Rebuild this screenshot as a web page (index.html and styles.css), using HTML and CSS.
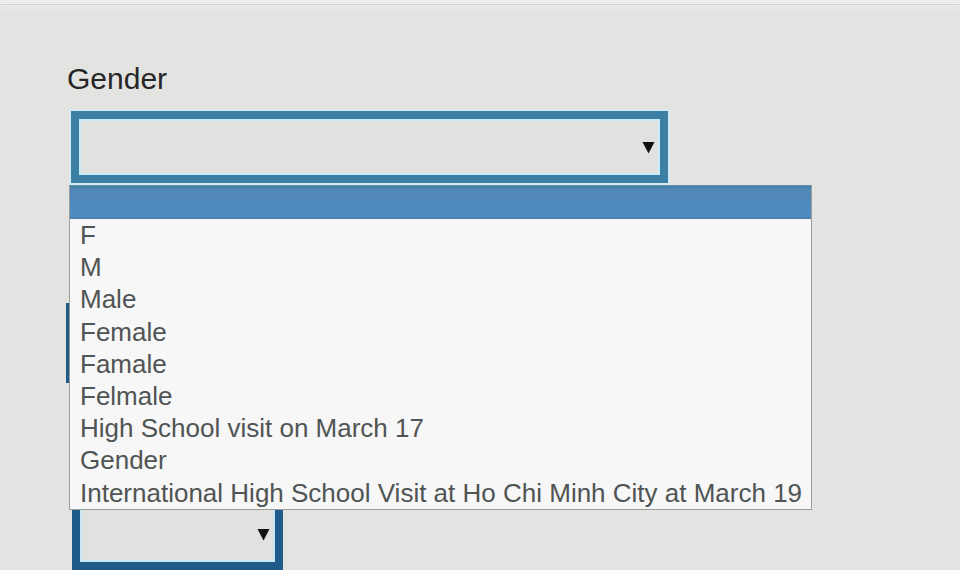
FILE: index.html
```html
<!DOCTYPE html>
<html>
<head>
<meta charset="utf-8">
<link rel="stylesheet" href="styles.css">
</head>
<body>
<div class="topbar"></div>
<div class="form">
  <div class="field">
    <div class="label">Gender</div>
    <div class="select-wrap">
      <div class="select focused">
        <svg class="arrow" width="13" height="14" viewBox="0 0 13 14"><path d="M0.5 2 L12.5 2 L6.5 13.5 Z" fill="#111"/></svg>
      </div>
      <ul class="dropdown">
        <li class="selected">&nbsp;</li>
        <li>F</li>
        <li>M</li>
        <li>Male</li>
        <li>Female</li>
        <li>Famale</li>
        <li>Felmale</li>
        <li>High School visit on March 17</li>
        <li>Gender</li>
        <li>International High School Visit at Ho Chi Minh City at March 19</li>
      </ul>
    </div>
  </div>
  <div class="field2">
    <div class="select dark tall"></div>
  </div>
  <div class="field3">
    <div class="select dark short">
      <svg class="arrow" width="13" height="14" viewBox="0 0 13 14"><path d="M0.5 2 L12.5 2 L6.5 13.5 Z" fill="#111"/></svg>
    </div>
  </div>
</div>
</body>
</html>
```
FILE: styles.css
```css
html, body {
  margin: 0;
  padding: 0;
}
body {
  background: #e3e3e2;
  width: 960px;
  height: 570px;
  overflow: hidden;
  font-family: "Liberation Sans", Arial, sans-serif;
}
.topbar {
  height: 4px;
  background: #eeeeed;
  border-bottom: 1px solid #d3d3d2;
  box-shadow: 0 1px 0 #ececeb, 0 6px 4px #e8e8e7;
}
.form {
  padding-left: 67px;
  padding-top: 57px;
}
.label {
  font-size: 30px;
  line-height: 34px;
  color: #262626;
  height: 34px;
}
.select-wrap {
  position: relative;
  margin-top: 15px;
  margin-left: 4px;
  width: 597px;
}
.select {
  box-sizing: border-box;
  height: 72px;
  background: #e1e1e0;
  display: flex;
  align-items: center;
  justify-content: flex-end;
  padding-right: 5px;
}
.select.focused {
  width: 597px;
  border: 8px solid #3c7fa4;
  box-shadow: inset 0 0 0 2px #c8ebf7, 0 0 0 2px #d6ebf1;
}
.select.dark {
  border: 8px solid #1f5a89;
  box-shadow: inset 0 0 0 2px #c6e7f5;
}
.select.tall {
  width: 300px;
  height: 80px;
}
.select.short {
  width: 211px;
  height: 72px;
  padding-right: 5px;
}
.arrow {
  display: block;
  margin-top: 0;
}
.field2 {
  margin-top: 120px;
  margin-left: -1px;
}
.field3 {
  margin-top: 115px;
  margin-left: 5px;
}
.dropdown {
  position: absolute;
  z-index: 5;
  top: 74px;
  left: -2px;
  width: 743px;
  box-sizing: border-box;
  margin: 0;
  padding: 0;
  list-style: none;
  background: #f6f7f6;
  border: 1px solid #9b9d9d;
  border-top-color: #6a8ea8;
}
.dropdown li {
  height: 32.2px;
  line-height: 32px;
  padding-left: 10px;
  font-size: 26px;
  color: #505454;
  white-space: nowrap;
}
.dropdown li.selected {
  height: 33px;
  background: linear-gradient(#3f7ea3 0, #5088b6 3px, #4f8bc2 30px, #4a7fa8 33px);
}
```
